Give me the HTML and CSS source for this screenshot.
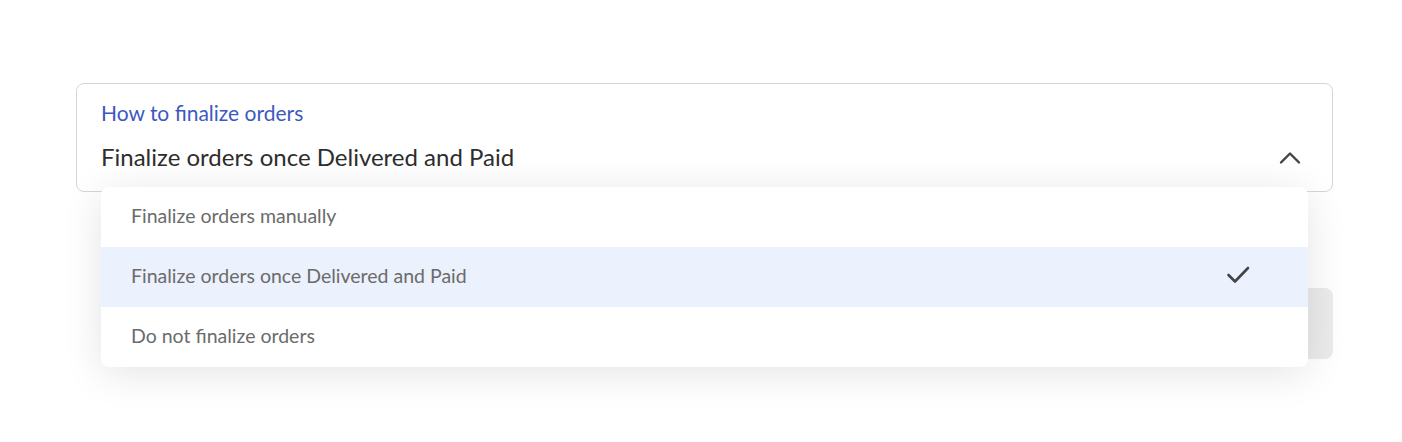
FILE: index.html
```html
<!DOCTYPE html>
<html lang="en">
<head>
    <meta charset="UTF-8">
    <title>Order settings</title>
    <link rel="stylesheet" href="styles.css">
</head>
<body>
    <div class="settings">
        <div class="select-wrap">
            <div class="select-box">
                <div class="select-text">
                    <div class="select-label">How to finalize orders</div>
                    <div class="select-value">Finalize orders once Delivered and Paid</div>
                </div>
                <svg class="chevron" width="24" height="24" viewBox="0 0 24 24">
                    <path d="M3 17.5L12 8.5L21 17.5" fill="none" stroke="#444" stroke-width="2.4" stroke-linecap="round" stroke-linejoin="round"/>
                </svg>
            </div>

            <ul class="menu">
                <li class="menu-item">Finalize orders manually</li>
                <li class="menu-item selected">
                    <span>Finalize orders once Delivered and Paid</span>
                    <svg class="check" width="24" height="24" viewBox="0 0 24 24">
                        <path d="M2.5 11L9 17.5L22 4" fill="none" stroke="#444" stroke-width="2.6" stroke-linecap="round" stroke-linejoin="round"/>
                    </svg>
                </li>
                <li class="menu-item">Do not finalize orders</li>
            </ul>
        </div>

        <div class="actions">
            <button class="save-btn" disabled>Save</button>
        </div>
    </div>
</body>
</html>
```

FILE: styles.css
```css
body {
    margin: 0;
    padding: 83px 69px 83px 76px;
    font-family: Lato, "Open Sans", sans-serif;
    background-color: #ffffff;
    color: #333;
}

.settings {
    width: 1257px;
}

.select-wrap {
    position: relative;
}

.select-box {
    display: flex;
    align-items: flex-end;
    justify-content: space-between;
    border: 1px solid #d6d6d6;
    border-radius: 8px;
    padding: 16px 30px 20px 24px;
}

.select-label {
    font-size: 21px;
    line-height: 26px;
    color: #3d59c0;
}

.select-value {
    margin-top: 16px;
    font-size: 24px;
    line-height: 29px;
    color: #2e2e2e;
}

.chevron {
    margin-bottom: 2px;
}

.menu {
    position: absolute;
    top: 104px;
    left: 25px;
    right: 25px;
    margin: 0;
    padding: 0;
    list-style: none;
    background-color: #fff;
    border-radius: 8px;
    overflow: hidden;
    box-shadow: 0 6px 40px rgba(0, 0, 0, 0.11);
    z-index: 2;
}

.menu-item {
    display: flex;
    align-items: center;
    justify-content: space-between;
    box-sizing: border-box;
    height: 60px;
    padding: 0 58px 3px 30px;
    font-size: 19.5px;
    color: #6b6b6b;
}

.menu-item.selected {
    background-color: #ebf1fd;
}

.actions {
    display: flex;
    justify-content: flex-end;
    margin-top: 96px;
}

.save-btn {
    width: 220px;
    height: 71px;
    border: none;
    border-radius: 8px;
    background-color: #ebebeb;
    color: #aaa;
    font-family: inherit;
    font-size: 18px;
}
```
